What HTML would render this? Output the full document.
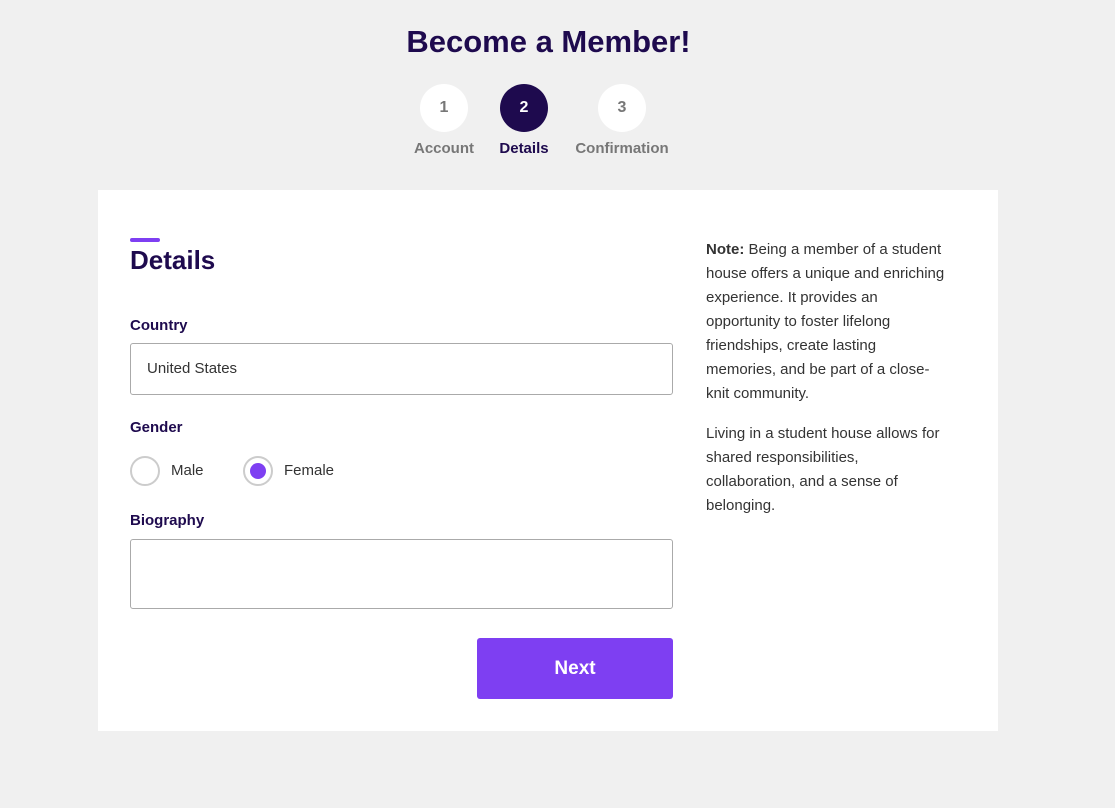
<!DOCTYPE html>
<html><head><meta charset="utf-8"><style>
*{box-sizing:border-box;margin:0;padding:0}
body{width:1115px;height:808px;background:#f0f0f0;font-family:"Liberation Sans",sans-serif;position:relative;overflow:hidden;color:#222}
h1{position:absolute;top:24px;left:0;width:1097px;text-align:center;font-size:31px;font-weight:bold;color:#1e0a4e}
.step{position:absolute;top:84px;width:48px;height:48px;border-radius:50%;background:#fff;color:#777;font-weight:bold;font-size:16px;text-align:center;line-height:48px}
.lab{position:absolute;top:140px;font-size:15px;font-weight:bold;color:#777;text-align:center}
.card{position:absolute;left:98px;top:190px;width:900px;height:541px;background:#fff}
.bar{position:absolute;left:130px;top:238px;width:30px;height:4px;border-radius:2px;background:#7e3ff2}
.t{position:absolute;left:130px;top:245px;font-size:26px;font-weight:bold;color:#1e0a4e}
.l{position:absolute;left:130px;font-size:15px;font-weight:bold;color:#1e0a4e}
.inp{position:absolute;left:130px;width:543px;border:1px solid #aaa;border-radius:3px;background:#fff}
.r{position:absolute;top:456px;width:30px;height:30px;border-radius:50%;border:2px solid #ccc;background:#fff}
.rt{position:absolute;top:462px;font-size:15px;color:#333}
.btn{position:absolute;left:477px;top:638px;width:196px;height:61px;background:#7e3ff2;border-radius:3px;color:#fff;font-weight:bold;font-size:19px;text-align:center;line-height:61px}
.note{position:absolute;left:706px;top:238px;width:280px;font-size:15px;line-height:24px;color:#333;white-space:nowrap}
</style></head><body>
<h1>Become a Member!</h1>
<div class="step" style="left:420px">1</div>
<div class="step" style="left:500px;background:#1e0a4e;color:#fff">2</div>
<div class="step" style="left:598px">3</div>
<div class="lab" style="left:404px;width:80px">Account</div>
<div class="lab" style="left:484px;width:80px;color:#1e0a4e">Details</div>
<div class="lab" style="left:562px;width:120px">Confirmation</div>
<div class="card"></div>
<div class="bar"></div>
<div class="t">Details</div>
<div class="l" style="top:317px">Country</div>
<div class="inp" style="top:343px;height:52px;padding:16px;font-size:15px;color:#333">United States</div>
<div class="l" style="top:419px">Gender</div>
<div class="r" style="left:130px"></div>
<div class="rt" style="left:171px">Male</div>
<div class="r" style="left:243px"><div style="position:absolute;left:5px;top:5px;width:16px;height:16px;border-radius:50%;background:#7e3ff2"></div></div>
<div class="rt" style="left:284px">Female</div>
<div class="l" style="top:512px">Biography</div>
<div class="inp" style="top:539px;height:70px"></div>
<div class="btn">Next</div>
<div class="note"><p><b>Note:</b> Being a member of a student<br>house offers a unique and enriching<br>experience. It provides an<br>opportunity to foster lifelong<br>friendships, create lasting<br>memories, and be part of a close-<br>knit community.</p><p style="margin-top:16px">Living in a student house allows for<br>shared responsibilities,<br>collaboration, and a sense of<br>belonging.</p></div>
</body></html>
